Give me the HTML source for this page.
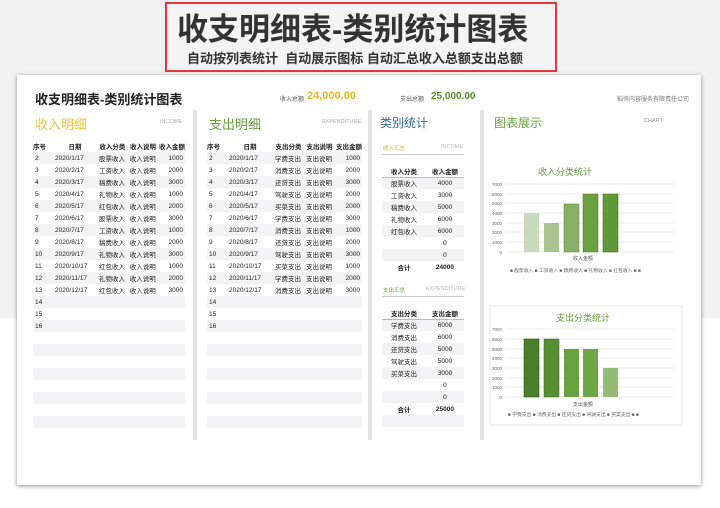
<!DOCTYPE html>
<html><head><meta charset="utf-8"><style>
*{margin:0;padding:0;box-sizing:border-box}
body{width:720px;height:508px;overflow:hidden;background:#fff;font-family:"Liberation Sans","Noto Sans CJK SC",sans-serif;position:relative;color:#222}
.a{position:absolute;white-space:nowrap}
.top{position:absolute;left:0;top:0;width:720px;height:318px;background:#f2f2f2}
.red{position:absolute;left:165px;top:2px;width:392px;height:70px;border:2px solid #e0393e;background:#f4f4f4}
.sheet{position:absolute;left:17px;top:75px;width:684px;height:410px;background:#fff;box-shadow:0 1px 4px rgba(0,0,0,.45)}
.sep{position:absolute;top:110px;width:4px;height:330px;background:#e4e4e4}
table{position:absolute;border-collapse:collapse;font-size:6.5px}
td{height:12px;padding:0 2px}
tr.z td{background:#f3f3f5}
th{font-size:6.5px;height:12px;font-weight:bold}
</style></head><body>
<div class="top"></div>
<div class="red"></div>
<div class="a" style="left:177px;top:4px;font-size:31px;font-weight:bold;color:#333;letter-spacing:0px">收支明细表-类别统计图表</div>
<div class="a" style="left:187px;top:48px;font-size:13px;font-weight:bold;color:#333">自动按列表统计&nbsp; 自动展示图标 自动汇总收入总额支出总额</div>
<div class="sheet"></div>
<div class="a" style="left:35px;top:89px;font-size:13px;font-weight:bold">收支明细表-类别统计图表</div>
<div class="a" style="left:280px;top:94px;font-size:6px;color:#555">收入总额</div>
<div class="a" style="left:307px;top:90px;font-size:11px;color:#e8b820;font-weight:bold">24,000.00</div>
<div class="a" style="left:400px;top:94px;font-size:6px;color:#555">支出总额</div>
<div class="a" style="left:431px;top:91px;font-size:10px;color:#5a8a2a;font-weight:bold">25,000.00</div>
<div class="a" style="left:617px;top:94px;font-size:6px;color:#777">稻壳内容服务有限责任公司</div>
<div class="sep" style="left:193px"></div><div class="sep" style="left:368px"></div><div class="sep" style="left:480px"></div>
<div class="a" style="left:35px;top:114px;font-size:13px;color:#e8c840">收入明细</div>
<div class="a" style="left:160px;top:119px;font-size:5.5px;color:#aaa">INCOME</div>
<div class="a" style="left:209px;top:114px;font-size:13px;color:#6aa040">支出明细</div>
<div class="a" style="left:322px;top:119px;font-size:5.5px;color:#aaa">EXPENDITURE</div>
<div class="a" style="left:380px;top:114px;font-size:12px;color:#3a6aa0">类别统计</div>
<div class="a" style="left:494px;top:114px;font-size:12px;color:#6aa040">图表展示</div>
<div class="a" style="left:644px;top:118px;font-size:5.5px;color:#999">CHART</div>

<table style="left:33px;top:140px;width:152px">
<tr><th style="width:20px;text-align:left">序号</th><th style="width:44px">日期</th><th>收入分类</th><th>收入说明</th><th style="text-align:right">收入金额</th></tr>
<tr class="z"><td>2</td><td>2020/1/17</td><td>股票收入</td><td>收入说明</td><td align="right">1000</td></tr>
<tr><td>3</td><td>2020/2/17</td><td>工资收入</td><td>收入说明</td><td align="right">2000</td></tr>
<tr class="z"><td>4</td><td>2020/3/17</td><td>稿费收入</td><td>收入说明</td><td align="right">3000</td></tr>
<tr><td>5</td><td>2020/4/17</td><td>礼物收入</td><td>收入说明</td><td align="right">1000</td></tr>
<tr class="z"><td>6</td><td>2020/5/17</td><td>红包收入</td><td>收入说明</td><td align="right">2000</td></tr>
<tr><td>7</td><td>2020/6/17</td><td>股票收入</td><td>收入说明</td><td align="right">3000</td></tr>
<tr class="z"><td>8</td><td>2020/7/17</td><td>工资收入</td><td>收入说明</td><td align="right">1000</td></tr>
<tr><td>9</td><td>2020/8/17</td><td>稿费收入</td><td>收入说明</td><td align="right">2000</td></tr>
<tr class="z"><td>10</td><td>2020/9/17</td><td>礼物收入</td><td>收入说明</td><td align="right">3000</td></tr>
<tr><td>11</td><td>2020/10/17</td><td>红包收入</td><td>收入说明</td><td align="right">1000</td></tr>
<tr class="z"><td>12</td><td>2020/11/17</td><td>礼物收入</td><td>收入说明</td><td align="right">2000</td></tr>
<tr><td>13</td><td>2020/12/17</td><td>红包收入</td><td>收入说明</td><td align="right">3000</td></tr>
<tr class="z"><td>14</td><td></td><td></td><td></td><td></td></tr>
<tr><td>15</td><td></td><td></td><td></td><td></td></tr>
<tr class="z"><td>16</td><td></td><td></td><td></td><td></td></tr>
<tr><td>&nbsp;</td><td></td><td></td><td></td><td></td></tr>
<tr class="z"><td>&nbsp;</td><td></td><td></td><td></td><td></td></tr>
<tr><td>&nbsp;</td><td></td><td></td><td></td><td></td></tr>
<tr class="z"><td>&nbsp;</td><td></td><td></td><td></td><td></td></tr>
<tr><td>&nbsp;</td><td></td><td></td><td></td><td></td></tr>
<tr class="z"><td>&nbsp;</td><td></td><td></td><td></td><td></td></tr>
<tr><td>&nbsp;</td><td></td><td></td><td></td><td></td></tr>
<tr class="z"><td>&nbsp;</td><td></td><td></td><td></td><td></td></tr>
</table>

<table style="left:207px;top:140px;width:155px">
<tr><th style="width:20px;text-align:left">序号</th><th style="width:46px">日期</th><th>支出分类</th><th>支出说明</th><th style="text-align:right">支出金额</th></tr>
<tr class="z"><td>2</td><td>2020/1/17</td><td>学费支出</td><td>支出说明</td><td align="right">1000</td></tr>
<tr><td>3</td><td>2020/2/17</td><td>消费支出</td><td>支出说明</td><td align="right">2000</td></tr>
<tr class="z"><td>4</td><td>2020/3/17</td><td>还贷支出</td><td>支出说明</td><td align="right">3000</td></tr>
<tr><td>5</td><td>2020/4/17</td><td>驾驶支出</td><td>支出说明</td><td align="right">2000</td></tr>
<tr class="z"><td>6</td><td>2020/5/17</td><td>买菜支出</td><td>支出说明</td><td align="right">2000</td></tr>
<tr><td>7</td><td>2020/6/17</td><td>学费支出</td><td>支出说明</td><td align="right">3000</td></tr>
<tr class="z"><td>8</td><td>2020/7/17</td><td>消费支出</td><td>支出说明</td><td align="right">1000</td></tr>
<tr><td>9</td><td>2020/8/17</td><td>还贷支出</td><td>支出说明</td><td align="right">2000</td></tr>
<tr class="z"><td>10</td><td>2020/9/17</td><td>驾驶支出</td><td>支出说明</td><td align="right">3000</td></tr>
<tr><td>11</td><td>2020/10/17</td><td>买菜支出</td><td>支出说明</td><td align="right">1000</td></tr>
<tr class="z"><td>12</td><td>2020/11/17</td><td>学费支出</td><td>支出说明</td><td align="right">2000</td></tr>
<tr><td>13</td><td>2020/12/17</td><td>消费支出</td><td>支出说明</td><td align="right">3000</td></tr>
<tr class="z"><td>14</td><td></td><td></td><td></td><td></td></tr>
<tr><td>15</td><td></td><td></td><td></td><td></td></tr>
<tr class="z"><td>16</td><td></td><td></td><td></td><td></td></tr>
<tr><td>&nbsp;</td><td></td><td></td><td></td><td></td></tr>
<tr class="z"><td>&nbsp;</td><td></td><td></td><td></td><td></td></tr>
<tr><td>&nbsp;</td><td></td><td></td><td></td><td></td></tr>
<tr class="z"><td>&nbsp;</td><td></td><td></td><td></td><td></td></tr>
<tr><td>&nbsp;</td><td></td><td></td><td></td><td></td></tr>
<tr class="z"><td>&nbsp;</td><td></td><td></td><td></td><td></td></tr>
<tr><td>&nbsp;</td><td></td><td></td><td></td><td></td></tr>
<tr class="z"><td>&nbsp;</td><td></td><td></td><td></td><td></td></tr>
</table>

<div class="a" style="left:383px;top:144px;font-size:5.5px;color:#d4b020">收入汇总</div>
<div class="a" style="left:441px;top:144px;font-size:5.5px;color:#bbb">INCOME</div>
<div class="a" style="left:382px;top:154px;width:82px;height:1px;background:#ccc"></div>
<table style="left:382px;top:165px;width:82px;text-align:center">
<tr><th>收入分类</th><th>收入金额</th></tr>
<tr class="z"><td style="border-top:1px solid #bbb">股票收入</td><td style="border-top:1px solid #bbb">4000</td></tr>
<tr><td>工资收入</td><td>3000</td></tr>
<tr class="z"><td>稿费收入</td><td>5000</td></tr>
<tr><td>礼物收入</td><td>6000</td></tr>
<tr class="z"><td>红包收入</td><td>6000</td></tr>
<tr><td></td><td>0</td></tr>
<tr class="z"><td></td><td>0</td></tr>
<tr><th>合计</th><th>24000</th></tr>
</table>
<div class="a" style="left:383px;top:286px;font-size:5.5px;color:#6aa040">支出汇总</div>
<div class="a" style="left:426px;top:286px;font-size:5.5px;color:#bbb">EXPENDITURE</div>
<div class="a" style="left:382px;top:296px;width:82px;height:1px;background:#ccc"></div>
<table style="left:382px;top:307px;width:82px;text-align:center">
<tr><th>支出分类</th><th>支出金额</th></tr>
<tr class="z"><td style="border-top:1px solid #bbb">学费支出</td><td style="border-top:1px solid #bbb">6000</td></tr>
<tr><td>消费支出</td><td>6000</td></tr>
<tr class="z"><td>还贷支出</td><td>5000</td></tr>
<tr><td>驾驶支出</td><td>5000</td></tr>
<tr class="z"><td>买菜支出</td><td>3000</td></tr>
<tr><td></td><td>0</td></tr>
<tr class="z"><td></td><td>0</td></tr>
<tr><th>合计</th><th>25000</th></tr>
<tr class="z"><td>&nbsp;</td><td></td></tr>
</table>

<svg class="a" style="left:0;top:0" width="720" height="508" font-family="Liberation Sans, Noto Sans CJK SC, sans-serif">
<text x="565" y="175" font-size="9" fill="#6a9a40" text-anchor="middle">收入分类统计</text>
<g stroke="#ddd" stroke-width="0.6">
<line x1="506" y1="184" x2="674" y2="184"/><line x1="506" y1="194" x2="674" y2="194"/><line x1="506" y1="203" x2="674" y2="203"/><line x1="506" y1="213" x2="674" y2="213"/><line x1="506" y1="223" x2="674" y2="223"/><line x1="506" y1="232" x2="674" y2="232"/><line x1="506" y1="242" x2="674" y2="242"/><line x1="506" y1="252" x2="674" y2="252"/>
</g>
<g font-size="4.5" fill="#666" text-anchor="end">
<text x="502" y="186">7000</text><text x="502" y="196">6000</text><text x="502" y="205">5000</text><text x="502" y="215">4000</text><text x="502" y="225">3000</text><text x="502" y="234">2000</text><text x="502" y="244">1000</text><text x="502" y="254">0</text></g>
<rect x="524" y="213" width="15" height="39" fill="#c9d9bd"/>
<rect x="544" y="223" width="15" height="29" fill="#a9c491"/>
<rect x="564" y="204" width="15" height="48" fill="#89b069" stroke="#5a8a3a" stroke-width=".5"/>
<rect x="583" y="194" width="15" height="58" fill="#6aa040" stroke="#4a7a2a" stroke-width=".5"/>
<rect x="603" y="194" width="15" height="58" fill="#5e9a38" stroke="#3a6a20" stroke-width=".5"/>
<text x="583" y="260" font-size="5" fill="#555" text-anchor="middle">收入金额</text>
<text x="510" y="272" font-size="4.8" fill="#666">■ 股票收入 ■ 工资收入 ■ 稿费收入 ■ 礼物收入 ■ 红包收入 ■ ■</text>
<rect x="490" y="306" width="192" height="119" fill="none" stroke="#ddd" stroke-width=".7"/>
<text x="583" y="321" font-size="9" fill="#6a9a40" text-anchor="middle">支出分类统计</text>
<g stroke="#ddd" stroke-width="0.6">
<line x1="506" y1="329" x2="674" y2="329"/><line x1="506" y1="339" x2="674" y2="339"/><line x1="506" y1="349" x2="674" y2="349"/><line x1="506" y1="358" x2="674" y2="358"/><line x1="506" y1="368" x2="674" y2="368"/><line x1="506" y1="378" x2="674" y2="378"/><line x1="506" y1="387" x2="674" y2="387"/><line x1="506" y1="397" x2="674" y2="397"/>
</g>
<g font-size="4.5" fill="#666" text-anchor="end">
<text x="502" y="331">7000</text><text x="502" y="341">6000</text><text x="502" y="351">5000</text><text x="502" y="360">4000</text><text x="502" y="370">3000</text><text x="502" y="380">2000</text><text x="502" y="389">1000</text><text x="502" y="399">0</text></g>
<rect x="524" y="339" width="15" height="58" fill="#4a7e2a" stroke="#2a5a15" stroke-width=".6"/>
<rect x="544" y="339" width="15" height="58" fill="#5a8e35" stroke="#3a6a20" stroke-width=".5"/>
<rect x="564" y="349" width="15" height="48" fill="#6aa040"/>
<rect x="583" y="349" width="15" height="48" fill="#6ea545"/>
<rect x="603" y="368" width="15" height="29" fill="#94bb78"/>
<text x="583" y="406" font-size="5" fill="#555" text-anchor="middle">支出金额</text>
<text x="508" y="416" font-size="4.8" fill="#666">■ 学费支出 ■ 消费支出 ■ 还贷支出 ■ 驾驶支出 ■ 买菜支出 ■ ■</text>
</svg>
</body></html>
